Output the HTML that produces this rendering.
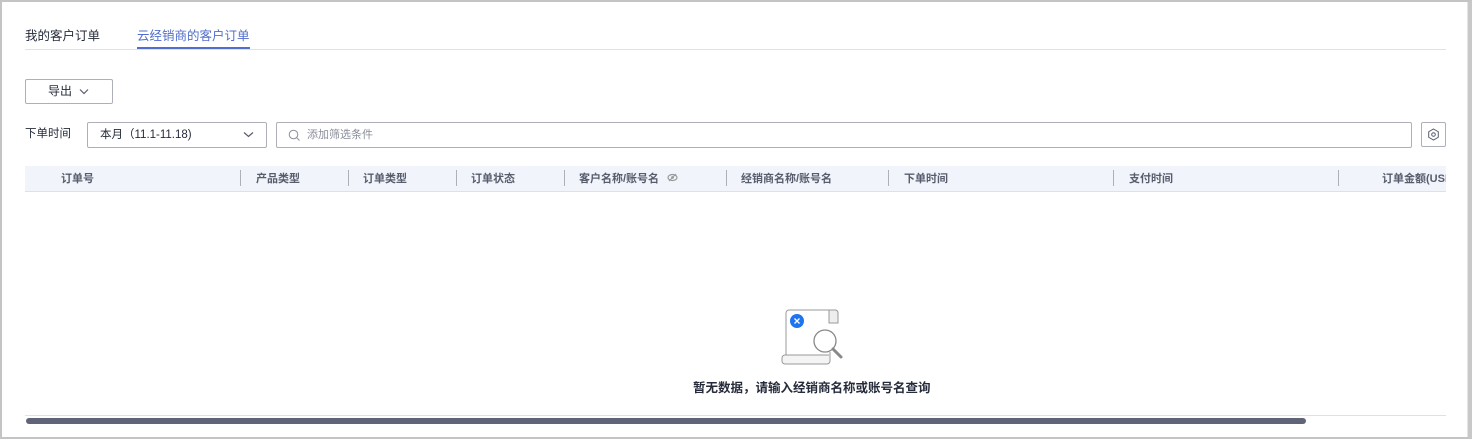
<!DOCTYPE html>
<html><head><meta charset="utf-8"><style>
*{margin:0;padding:0;box-sizing:border-box}
body{width:1472px;height:439px;overflow:hidden;background:#fff;font-family:"Liberation Sans","Noto Sans CJK SC",sans-serif;color:#252b3a;position:relative}
.frame{position:absolute;left:0;top:0;width:1472px;height:439px;border:2px solid #c4c4c4;border-right:4px solid #c8c8c8}
.vline{position:absolute;left:1467px;top:2px;width:1px;height:435px;background:#e4e4e4}
.a{position:absolute;white-space:nowrap}
.th{position:absolute;top:170px;font-size:11px;font-weight:bold;color:#575d6c;white-space:nowrap}
.sep{position:absolute;top:170px;width:1px;height:16px;background:#adb0b8}
</style></head><body>
<div class="frame"></div><div class="vline"></div>
<div class="a" style="left:25px;top:25px;font-size:12.5px;color:#252b3a">我的客户订单</div>
<div class="a" style="left:137px;top:25px;font-size:12.5px;color:#526ecc">云经销商的客户订单</div>
<div class="a" style="left:25px;top:49px;width:1421px;height:1px;background:#dfe1e6"></div>
<div class="a" style="left:137px;top:47px;width:113px;height:2px;background:#526ecc"></div>
<div class="a" style="left:25px;top:79px;width:88px;height:25px;border:1px solid #adb0b8;border-radius:2px;font-size:12px;line-height:23px;padding-left:22px">导出
<svg style="position:absolute;left:53px;top:8px" width="10" height="7" viewBox="0 0 10 7"><path d="M1 1.5L5 5.5L9 1.5" fill="none" stroke="#575d6c" stroke-width="1.2"/></svg></div>
<div class="a" style="left:25px;top:125px;font-size:11.5px">下单时间</div>
<div class="a" style="left:87px;top:122px;width:180px;height:26px;border:1px solid #adb0b8;border-radius:2px;font-size:11.5px;line-height:24px;padding-left:12px">本月（11.1-11.18)
<svg style="position:absolute;left:155px;top:8px" width="11" height="7" viewBox="0 0 11 7"><path d="M1 1.5L5.5 5.5L10 1.5" fill="none" stroke="#575d6c" stroke-width="1.2"/></svg></div>
<div class="a" style="left:276px;top:122px;width:1136px;height:26px;border:1px solid #adb0b8;border-radius:2px;font-size:11px;line-height:24px;padding-left:30px;color:#8a8e99">添加筛选条件
<svg style="position:absolute;left:11px;top:6px" width="13" height="13" viewBox="0 0 13 13"><circle cx="5.5" cy="5.5" r="4.3" fill="none" stroke="#8a8e99" stroke-width="1"/><path d="M8.7 8.7L11.5 11.5" stroke="#8a8e99" stroke-width="1"/></svg></div>
<div class="a" style="left:1421px;top:122px;width:25px;height:25px;border:1px solid #adb0b8;border-radius:2px">
<svg style="position:absolute;left:5px;top:5px" width="13" height="13" viewBox="0 0 13 13"><path d="M6.5 1L11.3 3.75V9.25L6.5 12L1.7 9.25V3.75Z" fill="none" stroke="#575d6c" stroke-width="1"/><circle cx="6.5" cy="6.5" r="1.8" fill="none" stroke="#575d6c" stroke-width="1"/></svg></div>
<div class="a" style="left:25px;top:166px;width:1421px;height:26px;background:#f1f4fb;border-bottom:1px solid #dfe1e6"></div>
<div class="th" style="left:61px">订单号</div>
<div class="sep" style="left:240px"></div><div class="th" style="left:256px">产品类型</div>
<div class="sep" style="left:348px"></div><div class="th" style="left:363px">订单类型</div>
<div class="sep" style="left:456px"></div><div class="th" style="left:471px">订单状态</div>
<div class="sep" style="left:564px"></div><div class="th" style="left:579px">客户名称/账号名</div>
<svg class="a" style="left:667px;top:173px" width="11" height="9" viewBox="0 0 11 9"><ellipse cx="5.5" cy="4.5" rx="4.5" ry="3" fill="none" stroke="#999" stroke-width="1.2"/><circle cx="5.5" cy="4.5" r="1.4" fill="#999"/><path d="M2 8L9 1" stroke="#999" stroke-width="1"/></svg>
<div class="sep" style="left:726px"></div><div class="th" style="left:741px">经销商名称/账号名</div>
<div class="sep" style="left:888px"></div><div class="th" style="left:904px">下单时间</div>
<div class="sep" style="left:1113px"></div><div class="th" style="left:1129px">支付时间</div>
<div class="sep" style="left:1338px"></div><div class="th" style="left:1382px;width:64px;overflow:hidden">订单金额(USD)</div>
<svg class="a" style="left:778px;top:307px" width="66" height="60" viewBox="0 0 66 60">
<path d="M8 50V6a3 3 0 0 1 3-3h46a3 3 0 0 1 3 3v8" fill="#fff" stroke="#999" stroke-width="1"/>
<path d="M51 3h6a3 3 0 0 1 3 3v10h-9z" fill="#eee" stroke="#999" stroke-width="1"/>
<path d="M8 48V6" stroke="#999"/><path d="M52 45v9a3 3 0 0 1-3 3H7a3 3 0 0 1-3-3v-3a3 3 0 0 1 3-3h44" fill="#f4f4f4" stroke="#999" stroke-width="1"/>
<circle cx="47" cy="34" r="11" fill="#fff" stroke="#888" stroke-width="1.3"/>
<path d="M55 42l8 8" stroke="#888" stroke-width="3" stroke-linecap="round"/>
<circle cx="19" cy="14" r="7" fill="#1f74f0"/>
<path d="M16.5 11.5l5 5M21.5 11.5l-5 5" stroke="#fff" stroke-width="1.3"/>
</svg>
<div class="a" style="left:693px;top:377px;font-size:12.5px;font-weight:bold;color:#252b3a">暂无数据，请输入经销商名称或账号名查询</div>
<div class="a" style="left:25px;top:415px;width:1421px;height:1px;background:#dfe1e6"></div>
<div class="a" style="left:26px;top:418px;width:1280px;height:6px;border-radius:3px;background:#5f6477"></div>
</body></html>
